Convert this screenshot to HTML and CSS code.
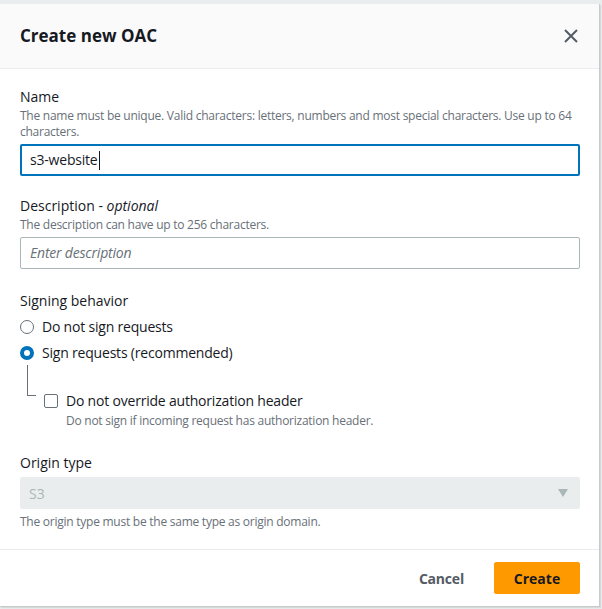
FILE: index.html
```html
<!DOCTYPE html>
<html lang="en">
<head>
<meta charset="utf-8">
<title>Create new OAC</title>
<link rel="stylesheet" href="styles.css">
</head>
<body>
<div class="modal">
  <div class="modal-header">
    <h2 class="modal-title">Create new OAC</h2>
    <button class="close-btn" aria-label="Close">
      <svg width="16" height="16" viewBox="0 0 16 16"><path d="M2 2 L14 14 M14 2 L2 14" stroke="#545b64" stroke-width="2" fill="none"/></svg>
    </button>
  </div>
  <div class="modal-body">
    <div class="field">
      <div class="label">Name</div>
      <div class="hint">The name must be unique. Valid characters: letters, numbers and most special characters. Use up to 64 characters.</div>
      <div class="input focused">s3-website<span class="caret"></span></div>
    </div>
    <div class="field field-desc">
      <div class="label">Description - <i>optional</i></div>
      <div class="hint">The description can have up to 256 characters.</div>
      <div class="input placeholder">Enter description</div>
    </div>
    <div class="field field-sign">
      <div class="label">Signing behavior</div>
      <div class="radios">
        <div class="radio-row"><span class="radio"></span><span class="opt">Do not sign requests</span></div>
        <div class="radio-row"><span class="radio checked"></span><span class="opt">Sign requests (recommended)</span></div>
      </div>
      <div class="nested">
        <div class="connector"></div>
        <div class="nested-content">
          <div class="check-row"><span class="checkbox"></span><span class="opt">Do not override authorization header</span></div>
          <div class="hint check-hint">Do not sign if incoming request has authorization header.</div>
        </div>
      </div>
    </div>
    <div class="field">
      <div class="label">Origin type</div>
      <div class="select"><span>S3</span><span class="tri"></span></div>
      <div class="hint after">The origin type must be the same type as origin domain.</div>
    </div>
  </div>
  <div class="modal-footer">
    <button class="btn-link">Cancel</button>
    <button class="btn-primary">Create</button>
  </div>
</div>
</body>
</html>
```
FILE: styles.css
```css
html, body {
  margin: 0;
  padding: 0;
}
body {
  background: #eaeded;
  font-family: "Open Sans", "Noto Sans", sans-serif;
  color: #16191f;
  width: 602px;
  height: 609px;
  overflow: hidden;
}
.modal {
  margin-top: 4px;
  width: 599px;
  background: #fff;
  border-right: 1px solid #c6cbcc;
  border-bottom: 1px solid #c6cbcc;
  box-shadow: 1px 1px 1px rgba(0,0,0,0.08);
}
.modal-header {
  height: 64px;
  background: #fafafa;
  border-bottom: 1px solid #eaeded;
  display: flex;
  align-items: center;
  justify-content: space-between;
  padding: 0 19px 0 20px;
}
.modal-title {
  margin: 0;
  font-size: 17px;
  font-weight: 700;
  line-height: 24px;
  color: #16191f;
  margin-top: -1px;
}
.close-btn {
  background: none;
  border: 0;
  padding: 0;
  width: 16px;
  height: 16px;
  display: flex;
  margin-right: 1px;
  margin-top: -1px;
}
.modal-body {
  padding: 17px 19px 19px 20px;
  display: flex;
  flex-direction: column;
  gap: 20px;
}
.field-desc {
  margin-top: -1px;
}
.field-sign {
  margin-top: 1px;
}
.label {
  font-size: 14px;
  line-height: 22px;
  color: #16191f;
}
.hint {
  font-size: 12px;
  line-height: 16px;
  color: #687078;
  letter-spacing: -0.25px;
}
.hint.after {
  margin-top: 5px;
}
.input {
  margin-top: 4px;
  height: 32px;
  box-sizing: border-box;
  border: 1px solid #aab7b8;
  border-radius: 2px;
  padding: 0 9px;
  font-size: 14px;
  line-height: 30px;
  display: flex;
  align-items: center;
  letter-spacing: -0.2px;
}
.input.focused {
  border: 2px solid #0073bb;
  padding: 0 8px;
}
.caret {
  display: inline-block;
  width: 1px;
  height: 19px;
  background: #16191f;
  margin-left: 1px;
}
.input.placeholder {
  font-style: italic;
  color: #687078;
}
.radios {
  margin-top: 4px;
  display: flex;
  flex-direction: column;
  gap: 4px;
}
.radio-row, .check-row {
  display: flex;
  align-items: center;
  height: 22px;
}
.opt {
  font-size: 14px;
  line-height: 22px;
  letter-spacing: -0.2px;
}
.radio {
  width: 14px;
  height: 14px;
  box-sizing: border-box;
  border: 1px solid #687078;
  border-radius: 50%;
  margin-right: 8px;
}
.radio.checked {
  border: 4px solid #0073bb;
}
.nested {
  display: flex;
  margin-left: 7px;
  margin-top: 1px;
  padding-bottom: 3px;
}
.connector {
  width: 9px;
  height: 31px;
  border-left: 1px solid #687078;
  border-bottom: 1px solid #687078;
  box-sizing: border-box;
  margin-right: 8px;
}
.nested-content {
  padding-top: 25px;
}
.check-hint {
  margin-left: 22px;
  margin-top: 1px;
}
.checkbox {
  width: 14px;
  height: 14px;
  box-sizing: border-box;
  border: 1px solid #687078;
  border-radius: 2px;
  margin-right: 8px;
}
.select {
  margin-top: 3px;
  height: 32px;
  box-sizing: border-box;
  background: #eaeded;
  border-radius: 2px;
  padding: 0 12px 0 9px;
  display: flex;
  align-items: center;
  justify-content: space-between;
  font-size: 14px;
  color: #aab7b8;
}
.tri {
  width: 0;
  height: 0;
  border-left: 5px solid transparent;
  border-right: 5px solid transparent;
  border-top: 8px solid #aab7b8;
}
.modal-footer {
  border-top: 1px solid #eaeded;
  padding: 12px 19px 12px 20px;
  display: flex;
  justify-content: flex-end;
  align-items: center;
  gap: 10px;
}
.btn-link {
  background: none;
  border: 0;
  font-family: inherit;
  font-size: 14px;
  font-weight: 700;
  color: #545b64;
  height: 32px;
  padding: 0 20px;
  letter-spacing: -0.2px;
}
.btn-primary {
  background: #ff9900;
  border: 1px solid #ff9900;
  border-radius: 2px;
  font-family: inherit;
  font-size: 14px;
  font-weight: 700;
  color: #16191f;
  height: 32px;
  width: 86px;
  padding: 0;
}
```
